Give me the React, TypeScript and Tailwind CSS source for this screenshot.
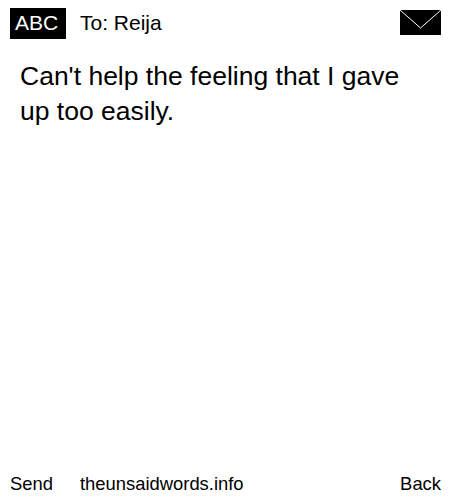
export default function App() {
  return (
    <div className="w-[450px] h-[500px] bg-white text-black flex flex-col font-['Liberation_Sans',Arial,sans-serif]">
      <div className="flex items-start pt-2 pl-2.5 pr-[9px]">
        <div className="w-14 h-[31px] bg-black text-white text-[21px] leading-[30px] pl-[5px]">ABC</div>
        <div className="ml-3.5 text-[21px] leading-[30px]">To: Reija</div>
        <svg className="ml-auto mt-0.5" width="41" height="25" viewBox="0 0 41 25">
          <rect width="41" height="25" fill="#000" />
          <path d="M0 0 L20.5 18 L41 0" fill="none" stroke="#fff" strokeWidth="1" />
        </svg>
      </div>
      <div className="px-5 pt-5 text-[26.5px] leading-[35px] flex-1">Can't help the feeling that I gave up too easily.</div>
      <div className="flex items-center pl-2.5 pr-[9px] pb-1 text-[18.4px] leading-6">
        <span className="w-[70px]">Send</span>
        <span>theunsaidwords.info</span>
        <span className="ml-auto">Back</span>
      </div>
    </div>
  );
}
